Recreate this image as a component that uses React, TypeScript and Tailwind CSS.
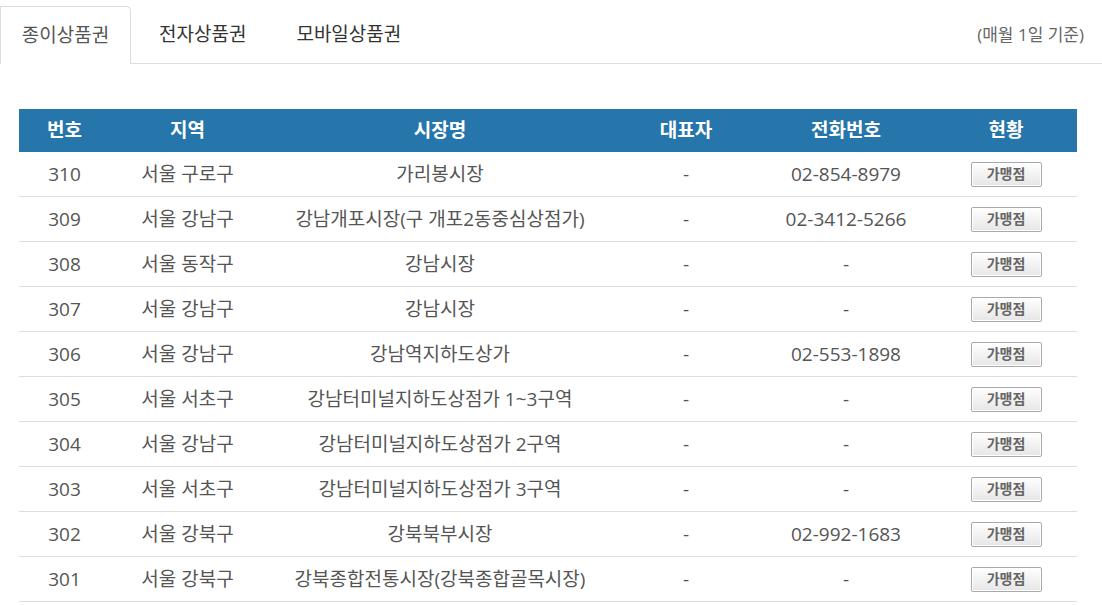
import React from 'react';

const rows = [
  { no: 310, area: '서울 구로구', name: '가리봉시장', ceo: '-', tel: '02-854-8979' },
  { no: 309, area: '서울 강남구', name: '강남개포시장(구 개포2동중심상점가)', ceo: '-', tel: '02-3412-5266' },
  { no: 308, area: '서울 동작구', name: '강남시장', ceo: '-', tel: '-' },
  { no: 307, area: '서울 강남구', name: '강남시장', ceo: '-', tel: '-' },
  { no: 306, area: '서울 강남구', name: '강남역지하도상가', ceo: '-', tel: '02-553-1898' },
  { no: 305, area: '서울 서초구', name: '강남터미널지하도상점가 1~3구역', ceo: '-', tel: '-' },
  { no: 304, area: '서울 강남구', name: '강남터미널지하도상점가 2구역', ceo: '-', tel: '-' },
  { no: 303, area: '서울 서초구', name: '강남터미널지하도상점가 3구역', ceo: '-', tel: '-' },
  { no: 302, area: '서울 강북구', name: '강북북부시장', ceo: '-', tel: '02-992-1683' },
  { no: 301, area: '서울 강북구', name: '강북종합전통시장(강북종합골목시장)', ceo: '-', tel: '-' },
];

const font = { fontFamily: '"Open Sans", "Noto Sans CJK KR", sans-serif' };

export default function App() {
  return (
    <div className="w-[1102px] h-[605px] bg-white overflow-hidden text-[#555]" style={font}>
      {/* Tabs */}
      <div className="flex items-end h-[64px] pt-[6px]">
        <div className="w-[131px] h-[58px] border border-b-0 border-[#ddd] rounded-tr-[5px] flex items-center justify-center text-[19px] text-[#555] bg-white">
          종이상품권
        </div>
        <div className="flex-1 h-[58px] border-b border-[#ddd] flex items-center text-[19px] text-[#333]">
          <span className="ml-[28px]">전자상품권</span>
          <span className="ml-[50px]">모바일상품권</span>
          <span className="ml-auto mr-[18px] text-[17px] text-[#666]">(매월 1일 기준)</span>
        </div>
      </div>

      {/* Table */}
      <div className="mt-[45px] ml-[19px] w-[1058px]">
        <div className="grid grid-cols-[91px_155px_350px_142px_178px_142px] h-[43px] bg-[#2676ab] text-white font-bold text-[19px] items-center text-center">
          <div>번호</div>
          <div>지역</div>
          <div>시장명</div>
          <div>대표자</div>
          <div>전화번호</div>
          <div>현황</div>
        </div>
        {rows.map((r) => (
          <div
            key={r.no}
            className="grid grid-cols-[91px_155px_350px_142px_178px_142px] h-[45px] border-b border-[#ddd] items-center text-center text-[19px] text-[#555]"
          >
            <div>{r.no}</div>
            <div>{r.area}</div>
            <div>{r.name}</div>
            <div>{r.ceo}</div>
            <div>{r.tel}</div>
            <div className="flex justify-center">
              <button className="w-[71px] h-[25px] border border-[#a9a9a9] rounded-[2px] bg-gradient-to-b from-white to-[#e6e6e6] shadow-[inset_0_0_0_1px_#fff] text-[14px] font-bold text-[#666] leading-none">
                가맹점
              </button>
            </div>
          </div>
        ))}
      </div>
    </div>
  );
}
